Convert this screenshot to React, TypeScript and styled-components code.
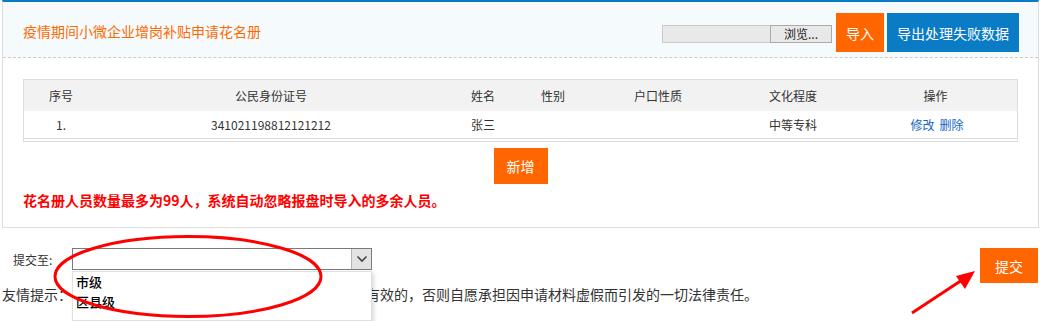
import { createGlobalStyle } from 'styled-components'
import styled from 'styled-components'

const GlobalStyle = createGlobalStyle`
  html, body {
    margin: 0;
    padding: 0;
    background: #fff;
  }
  body {
    font-family: "Noto Sans CJK SC", "Noto Sans", sans-serif;
    font-size: 12px;
    color: #333;
  }
  * {
    box-sizing: border-box;
  }
`

type Member = {
  no: string
  idCard: string
  name: string
  gender: string
  household: string
  education: string
}

const columns = ['序号', '公民身份证号', '姓名', '性别', '户口性质', '文化程度', '操作']

const members: Member[] = [
  {
    no: '1.',
    idCard: '341021198812121212',
    name: '张三',
    gender: '',
    household: '',
    education: '中等专科'
  }
]

const submitTargets = ['市级', '区县级']

const App = () => {
  return (
    <Page>
      <GlobalStyle />
      <Panel>
        <PanelHeader>
          <Title>疫情期间小微企业增岗补贴申请花名册</Title>
          <FilePicker>
            <FileName />
            <BrowseButton>浏览...</BrowseButton>
          </FilePicker>
          <ActionButton $color="#ff6600">导入</ActionButton>
          <ActionButton $color="#0a7bc5">导出处理失败数据</ActionButton>
        </PanelHeader>

        <PanelBody>
          <Table>
            <HeadRow>
              {columns.map((column) => (
                <Cell key={column}>{column}</Cell>
              ))}
            </HeadRow>
            {members.map((member) => (
              <DataRow key={member.idCard}>
                <Cell>{member.no}</Cell>
                <Cell>{member.idCard}</Cell>
                <Cell>{member.name}</Cell>
                <Cell>{member.gender}</Cell>
                <Cell>{member.household}</Cell>
                <Cell>{member.education}</Cell>
                <Cell>
                  <Links>
                    <Link>修改</Link>
                    <Link>删除</Link>
                  </Links>
                </Cell>
              </DataRow>
            ))}
            <TableFoot />
          </Table>

          <AddRow>
            <ActionButton $color="#ff6600" $small>
              新增
            </ActionButton>
          </AddRow>

          <Warning>花名册人员数量最多为99人，系统自动忽略报盘时导入的多余人员。</Warning>
        </PanelBody>
      </Panel>

      <Footer>
        <FooterMain>
          <SubmitRow>
            <SubmitLabel>提交至:</SubmitLabel>
            <SelectWrap>
              <SelectBox>
                <SelectValue />
                <SelectArrow>
                  <svg width="14" height="14" viewBox="0 0 14 14">
                    <path d="M2.5 4.5 L7 9 L11.5 4.5" fill="none" stroke="#444" strokeWidth="1.6" />
                  </svg>
                </SelectArrow>
              </SelectBox>
              <Options>
                {submitTargets.map((target) => (
                  <Option key={target}>{target}</Option>
                ))}
              </Options>
            </SelectWrap>
          </SubmitRow>
          <Tip>友情提示：申请人须保证所提交的申请材料均真实、合法、有效的，否则自愿承担因申请材料虚假而引发的一切法律责任。</Tip>
        </FooterMain>
        <SubmitButton>提交</SubmitButton>
      </Footer>

      <Annotations width="1043" height="321" viewBox="0 0 1043 321">
        <ellipse cx="188" cy="276.5" rx="133" ry="40" fill="none" stroke="#ff0000" strokeWidth="3" />
        <line x1="912" y1="313" x2="962" y2="280" stroke="#ff0000" strokeWidth="3" />
        <polygon points="975,271 956,276 965,289" fill="#ff0000" />
      </Annotations>
    </Page>
  )
}

const Page = styled.div`
  position: relative;
  width: 1043px;
  height: 321px;
  overflow: hidden;
`

const Panel = styled.div`
  margin-left: 2px;
  width: 1037px;
  border: 1px solid #dddddd;
  border-top: 2px solid #0a7bc5;
`

const PanelHeader = styled.div`
  display: flex;
  align-items: flex-start;
  height: 56px;
  padding: 11px 19px 0 20px;
  background: #f5fafd;
  border-bottom: 1px dashed #cccccc;
`

const Title = styled.div`
  flex: 1;
  color: #ff6a00;
  font-size: 14px;
  line-height: 37px;
`

const FilePicker = styled.div`
  display: flex;
  margin-top: 12px;
  margin-right: 4px;
  height: 18px;
`

const FileName = styled.div`
  width: 108px;
  height: 18px;
  background: #e9e9e9;
  border: 1px solid #c9c9c9;
  border-right: none;
`

const BrowseButton = styled.div`
  width: 62px;
  height: 18px;
  background: #e8e8e8;
  border: 1px solid #ababab;
  color: #222;
  font-size: 12px;
  line-height: 16px;
  text-align: center;
`

const ActionButton = styled.div<{ $color: string; $small?: boolean }>`
  display: flex;
  align-items: center;
  justify-content: center;
  height: ${({ $small }) => ($small ? '36px' : '39px')};
  padding: 0 ${({ $small }) => ($small ? '13px' : '10px')};
  margin-right: 3px;
  background: ${({ $color }) => $color};
  color: #fff;
  font-size: 14px;

  &:last-child {
    margin-right: 0;
  }
`

const PanelBody = styled.div`
  padding: 21px 20px 17px 20px;
`

const Table = styled.div`
  border: 1px solid #dddddd;
`

const HeadRow = styled.div`
  display: grid;
  grid-template-columns: 74px 346px 78px 62px 148px 122px 1fr;
  height: 31px;
  background: #f2f2f2;
  color: #333;
`

const DataRow = styled(HeadRow)`
  height: 28px;
  background: #fff;
  border-bottom: 1px solid #dddddd;
`

const TableFoot = styled.div`
  height: 2px;
`

const Cell = styled.div`
  display: flex;
  align-items: center;
  justify-content: center;
  font-size: 12px;
  color: #333;
  white-space: nowrap;
`

const Links = styled.div`
  display: flex;
  gap: 5px;
  padding-left: 3px;
`

const Link = styled.span`
  color: #1466c6;
  cursor: pointer;
`

const AddRow = styled.div`
  display: flex;
  justify-content: center;
  margin-top: 6px;
`

const Warning = styled.div`
  margin-top: 6px;
  color: #ff0000;
  font-size: 14px;
  font-weight: bold;
  line-height: 20px;
`

const Footer = styled.div`
  display: flex;
  justify-content: space-between;
  align-items: flex-start;
  padding: 20px 5px 0 2px;
`

const FooterMain = styled.div`
  display: flex;
  flex-direction: column;
  min-width: 0;
`

const SubmitRow = styled.div`
  display: flex;
  align-items: center;
  padding-left: 11px;
`

const SubmitLabel = styled.div`
  width: 59px;
  font-size: 12px;
  color: #333;
  line-height: 21px;
`

const SelectWrap = styled.div`
  position: relative;
  width: 300px;
`

const SelectBox = styled.div`
  display: flex;
  height: 22px;
  border: 1px solid #7a7a7a;
  background: #fff;
`

const SelectValue = styled.div`
  flex: 1;
`

const SelectArrow = styled.div`
  display: flex;
  align-items: center;
  justify-content: center;
  width: 20px;
  background: #e3e3e3;
  border-left: 1px solid #b5b5b5;
`

const Options = styled.div`
  position: absolute;
  left: 0;
  right: 0;
  top: 23px;
  z-index: 2;
  height: 50px;
  padding-top: 0;
  background: #fff;
  border: 1px solid #e0e0e0;
  box-shadow: 2px 2px 4px rgba(0, 0, 0, 0.15);
`

const Option = styled.div`
  padding-left: 3px;
  height: 20px;
  line-height: 20px;
  font-size: 13px;
  font-weight: 500;
  color: #000;
`

const Tip = styled.div`
  margin-top: 14px;
  font-size: 14px;
  line-height: 20px;
  color: #333;
  white-space: nowrap;
`

const SubmitButton = styled.div`
  display: flex;
  align-items: center;
  justify-content: center;
  flex-shrink: 0;
  width: 58px;
  height: 35px;
  background: #ff6600;
  color: #fff;
  font-size: 14px;
`

const Annotations = styled.svg`
  position: absolute;
  left: 0;
  top: 0;
  z-index: 5;
  pointer-events: none;
`

export default App
